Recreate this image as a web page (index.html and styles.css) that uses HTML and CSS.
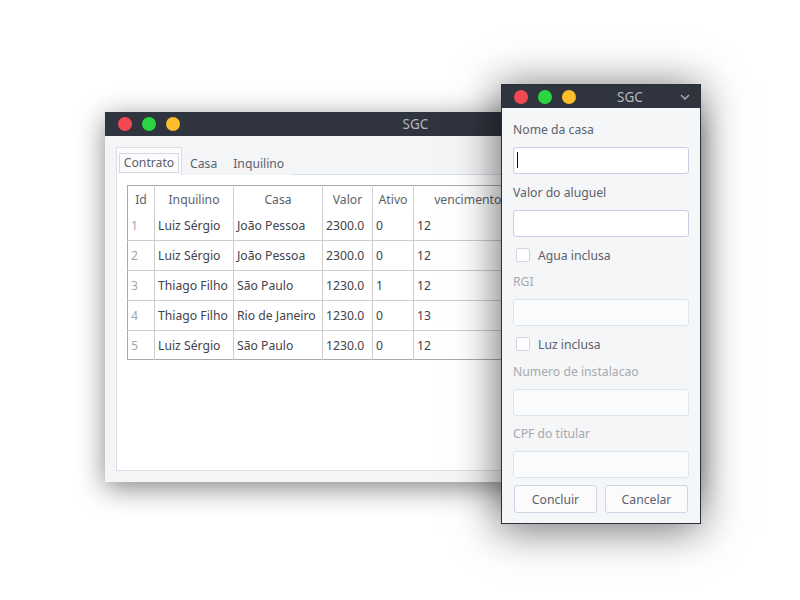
FILE: index.html
```html
<!DOCTYPE html>
<html lang="pt">
<head>
<meta charset="utf-8">
<title>SGC</title>
<link rel="stylesheet" href="styles.css">
</head>
<body>
<div class="desktop">
  <div class="window main-win">
    <div class="titlebar">
      <div class="lights">
        <span class="light red"></span>
        <span class="light green"></span>
        <span class="light yellow"></span>
      </div>
      <div class="title main-title">SGC</div>
    </div>
    <div class="win-body">
      <div class="tabbar">
        <div class="tab active"><span class="focus">Contrato</span></div>
        <div class="tab">Casa</div>
        <div class="tab">Inquilino</div>
        <div class="tabline"></div>
      </div>
      <div class="pane">
        <table class="grid">
          <colgroup>
            <col class="c-id"><col class="c-inq"><col class="c-casa"><col class="c-valor"><col class="c-ativo"><col class="c-venc">
          </colgroup>
          <thead>
            <tr><th>Id</th><th>Inquilino</th><th>Casa</th><th>Valor</th><th>Ativo</th><th>vencimento</th></tr>
          </thead>
          <tbody>
            <tr><td class="id">1</td><td>Luiz Sérgio</td><td>João Pessoa</td><td>2300.0</td><td>0</td><td>12</td></tr>
            <tr><td class="id">2</td><td>Luiz Sérgio</td><td>João Pessoa</td><td>2300.0</td><td>0</td><td>12</td></tr>
            <tr><td class="id">3</td><td>Thiago Filho</td><td>São Paulo</td><td>1230.0</td><td>1</td><td>12</td></tr>
            <tr><td class="id">4</td><td>Thiago Filho</td><td>Rio de Janeiro</td><td>1230.0</td><td>0</td><td>13</td></tr>
            <tr><td class="id">5</td><td>Luiz Sérgio</td><td>São Paulo</td><td>1230.0</td><td>0</td><td>12</td></tr>
          </tbody>
        </table>
      </div>
    </div>
  </div>

  <div class="window dialog">
    <div class="titlebar dlg-bar">
      <div class="lights">
        <span class="light red"></span>
        <span class="light green"></span>
        <span class="light yellow"></span>
      </div>
      <div class="title dlg-title">SGC</div>
      <svg class="chev" width="10" height="6" viewBox="0 0 10 6"><polyline points="1,1 5,5 9,1" fill="none" stroke="#a3a7ae" stroke-width="1.6"/></svg>
    </div>
    <div class="form">
      <div class="group">
        <div class="lbl">Nome da casa</div>
        <div class="input"><span class="caret"></span></div>
      </div>
      <div class="group extra">
        <div class="lbl">Valor do aluguel</div>
        <div class="input"></div>
      </div>
      <div class="check"><span class="box"></span><span>Agua inclusa</span></div>
      <div class="group">
        <div class="lbl off">RGI</div>
        <div class="input disabled"></div>
      </div>
      <div class="check"><span class="box"></span><span>Luz inclusa</span></div>
      <div class="group extra">
        <div class="lbl off">Numero de instalacao</div>
        <div class="input disabled"></div>
      </div>
      <div class="group">
        <div class="lbl off">CPF do titular</div>
        <div class="input disabled"></div>
      </div>
      <div class="buttons">
        <div class="btn">Concluir</div>
        <div class="btn">Cancelar</div>
      </div>
    </div>
  </div>
</div>
</body>
</html>
```

FILE: styles.css
```css
* { box-sizing: border-box; }
html, body { margin: 0; padding: 0; background: #ffffff; }
body { font-family: "Noto Sans", "Open Sans", sans-serif; font-size: 12.2px; color: #5c616c; }

.desktop { position: relative; width: 800px; height: 600px; overflow: hidden; background: #ffffff; }

.window { position: absolute; display: flex; flex-direction: column; }

.main-win {
  left: 105px; top: 112px; width: 590px; height: 370px;
  background: #f4f5f7;
  box-shadow: 0 6px 26px rgba(0,0,0,0.48);
}

.titlebar {
  height: 24px; flex: none;
  background: #2f343f;
  display: flex; align-items: center;
  padding-left: 13px;
}
.lights { display: flex; gap: 10px; }
.light { width: 14px; height: 14px; border-radius: 50%; display: block; }
.light.red { background: #f04a50; }
.light.green { background: #2ad63f; }
.light.yellow { background: #fcbf2b; }

.title { flex: 1; text-align: center; color: #b4b8bf; font-size: 13.5px; }
.main-title { padding-right: 44px; }

.win-body { flex: 1; display: flex; flex-direction: column; padding: 11px 0 11px 11px; }

.tabbar { display: flex; height: 28px; align-items: stretch; }
.tab { padding: 0 8px; display: flex; align-items: center; padding-top: 4px; }
.tab.active {
  width: 66px; padding: 0; justify-content: center;
  border: 1px solid #d9dde4; border-bottom: none;
  background: #fcfcfd;
  border-radius: 2px 2px 0 0;
}
.tab.active + .tab { padding-left: 8px; }
.focus { border: 1px solid #d3d8e2; padding: 0 4px; line-height: 18px; margin-top: 2px; color: #5c616c; }
.tabline { flex: 1; border-bottom: 1px solid #d9dde4; }

.pane {
  flex: 1;
  background: #ffffff;
  border: 1px solid #d9dde4; border-top: none; border-right: none;
  padding: 10px 0 0 10px;
}

.grid { border-collapse: collapse; table-layout: fixed; width: 394px; border: 1px solid #a9a9a9; border-right: none; }
.c-id { width: 27px; }
.c-inq { width: 79px; }
.c-casa { width: 89px; }
.c-valor { width: 50px; }
.c-ativo { width: 41px; }
.c-venc { width: 108px; }
.grid th {
  height: 25px; font-weight: normal; color: #5c616c; text-align: center;
  background: #fff; border-left: 1px solid #d0d0d0; padding: 2px 0 0 0; white-space: nowrap;
}
.grid th:first-child { border-left: none; }
.grid td {
  height: 30px; border: 1px solid #cdcdcd; border-top: none; padding: 0 0 0 3px;
  color: #3f434a; white-space: nowrap; overflow: hidden;
}
.grid td:first-child { border-left: none; }
.grid td.id { color: #a3a6ab; padding-left: 3px; }
.grid tr:last-child td { border-bottom: none; height: 29px; }

.dialog {
  left: 501px; top: 84px; width: 200px; height: 440px;
  background: #f5f6f7;
  border: 1px solid #2b2f39;
  box-shadow: -2px 4px 40px 2px rgba(0,0,0,0.55);
}
.dlg-bar { height: 23px; padding-left: 12px; padding-right: 10px; }
.dlg-title { padding-left: 4px; }
.chev { display: block; }

.form { display: flex; flex-direction: column; gap: 9px; padding: 13px 11px 0 11px; }
.group { display: flex; flex-direction: column; gap: 8px; }
.group.extra { margin-top: 1px; }
.lbl { line-height: 18px; color: #5c616c; }
.lbl.off { color: #a6a9ae; }
.input {
  height: 27px; background: #ffffff; border: 1px solid #c8cde5; border-radius: 3px;
  position: relative;
}
.input.disabled { background: #fafbfc; border-color: #e0e3ea; }
.caret { position: absolute; left: 3px; top: 4px; width: 1px; height: 16px; background: #111; }

.check { display: flex; align-items: center; gap: 8px; height: 18px; padding-left: 3px; }
.box { width: 14px; height: 14px; border: 1px solid #d2d6de; border-radius: 2px; background: #fff; display: block; }

.buttons { display: flex; gap: 8px; margin-top: -2px; padding: 0 1px; }
.btn {
  flex: 1; height: 28px; display: flex; align-items: center; justify-content: center;
  background: #fbfbfc; border: 1px solid #cfd5e5; border-radius: 3px; color: #5c616c;
}
```
